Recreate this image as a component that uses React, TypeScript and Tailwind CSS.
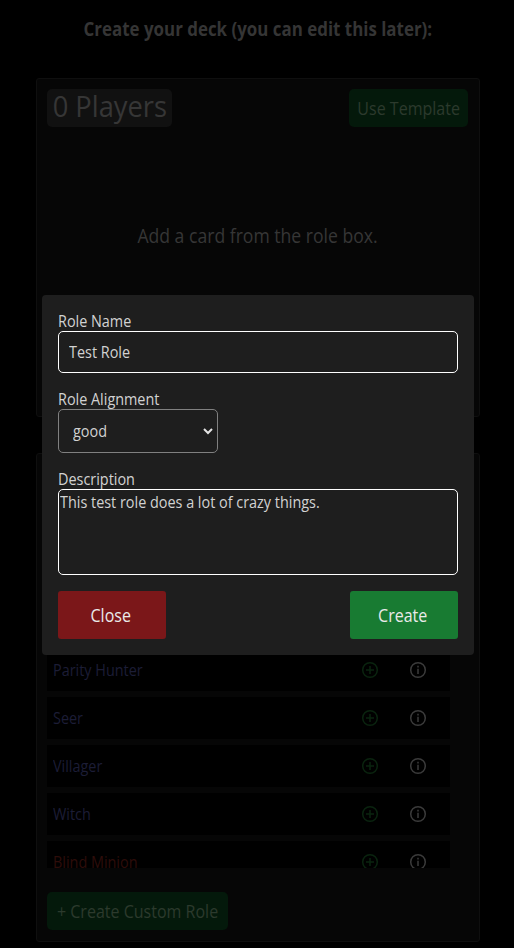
import React from "react";

const roles = [
  { name: "Parity Hunter", color: "text-[#1c1d36]" },
  { name: "Seer", color: "text-[#1c1d36]" },
  { name: "Villager", color: "text-[#1c1d36]" },
  { name: "Witch", color: "text-[#1c1d36]" },
  { name: "Blind Minion", color: "text-[#2e0d0a]" },
];

function Plus() {
  return (
    <svg className="size-[18px] text-[#0a240f]" viewBox="0 0 18 18" fill="none" stroke="currentColor" strokeWidth="1.5">
      <circle cx="9" cy="9" r="7.3" />
      <path d="M9 5v8M5 9h8" />
    </svg>
  );
}

function Info() {
  return (
    <svg className="size-[18px] text-[#3b3b3b]" viewBox="0 0 18 18" fill="none" stroke="currentColor" strokeWidth="1.5">
      <circle cx="9" cy="9" r="7.3" />
      <path d="M9 7.8v5.2M9 4.8v1.7" />
    </svg>
  );
}

function Narrow({ children }: { children: React.ReactNode }) {
  return <span className="inline-block origin-left scale-x-90">{children}</span>;
}

function NarrowCentered({ children }: { children: React.ReactNode }) {
  return <span className="inline-block origin-center scale-x-[0.89]">{children}</span>;
}

export default function App() {
  return (
    <div className="relative h-[948px] w-full overflow-hidden bg-black font-['Open_Sans','Noto_Sans',sans-serif] whitespace-nowrap">
      <h1 className="flex h-[78px] justify-center pt-[14px] pl-px text-[19px] leading-[30px] font-bold text-[#353535]">
        <NarrowCentered>Create your deck (you can edit this later):</NarrowCentered>
      </h1>

      <section className="ml-9 h-[339px] w-[444px] rounded-[3px] border border-[#0f0f0f] bg-[#060606]">
        <div className="flex justify-between pt-[10px] pr-[11px] pl-[10px]">
          <div className="flex h-[38px] w-[125px] items-center justify-center rounded-[5px] bg-[#111111] pb-1 text-[30px] leading-none text-[#363636]">
            <span className="inline-block scale-x-[0.91]">0 Players</span>
          </div>
          <div className="flex h-[38px] w-[119px] items-center justify-center rounded-[5px] bg-[#04190b] text-[18px] text-[#2c3a2d]">
            <NarrowCentered>Use Template</NarrowCentered>
          </div>
        </div>
        <p className="mt-[94px] text-center text-[20px] leading-[30px] text-[#363636]">
          <span className="inline-block scale-x-[0.88]">Add a card from the role box.</span>
        </p>
      </section>

      <section className="mt-9 ml-9 h-[489px] w-[444px] rounded-[3px] border border-[#0f0f0f] bg-[#060606] pl-[10px]">
        <div className="h-[414px] overflow-hidden pt-[195px]">
          {roles.map((role) => (
            <div key={role.name} className="mb-1.5 flex h-[42px] w-[403px] items-center bg-black pl-[6px]">
              <span className={`text-[16px] font-medium ${role.color}`}>
                <Narrow>{role.name}</Narrow>
              </span>
              <div className="mr-[23px] ml-auto flex gap-[30px]">
                <Plus />
                <Info />
              </div>
            </div>
          ))}
        </div>
        <div className="mt-6 flex h-[38px] w-[181px] items-center justify-center rounded-[5px] bg-[#04190b] text-[18px] text-[#2c3a2d]">
          <NarrowCentered>+ Create Custom Role</NarrowCentered>
        </div>
      </section>

      <form className="absolute top-[295px] left-[42px] flex h-[360px] w-[432px] flex-col rounded-[4px] bg-[#1e1e1e] px-4 pt-4 text-[16px] text-[#d2d2d2]">
        <label className="h-5 leading-5">
          <Narrow>Role Name</Narrow>
        </label>
        <div className="flex h-[42px] items-center rounded-[5px] border border-white pl-[10px]">
          <Narrow>Test Role</Narrow>
        </div>
        <label className="mt-4 h-5 leading-5">
          <Narrow>Role Alignment</Narrow>
        </label>
        <div className="flex h-11 w-40 items-center justify-between rounded-[5px] border border-[#808080] pr-1 pl-[14px]">
          <Narrow>good</Narrow>
          <svg className="h-[10px] w-[10px]" viewBox="0 0 10 10" fill="none" stroke="#e4e4e4" strokeWidth="2">
            <path d="M1 3l4 4 4-4" />
          </svg>
        </div>
        <label className="mt-4 h-5 leading-5">
          <Narrow>Description</Narrow>
        </label>
        <div className="h-[86px] rounded-[5px] border border-white pt-0.5 pl-px leading-5">
          <Narrow>This test role does a lot of crazy things.</Narrow>
        </div>
        <div className="mt-4 flex justify-between text-[18px] text-[#eaeaea]">
          <button type="button" className="h-12 w-[108px] rounded-[3px] bg-[#7b1719] pr-0.5">
            <NarrowCentered>Close</NarrowCentered>
          </button>
          <button type="button" className="h-12 w-[108px] rounded-[3px] bg-[#187b32] pr-0.5">
            <NarrowCentered>Create</NarrowCentered>
          </button>
        </div>
      </form>
    </div>
  );
}
